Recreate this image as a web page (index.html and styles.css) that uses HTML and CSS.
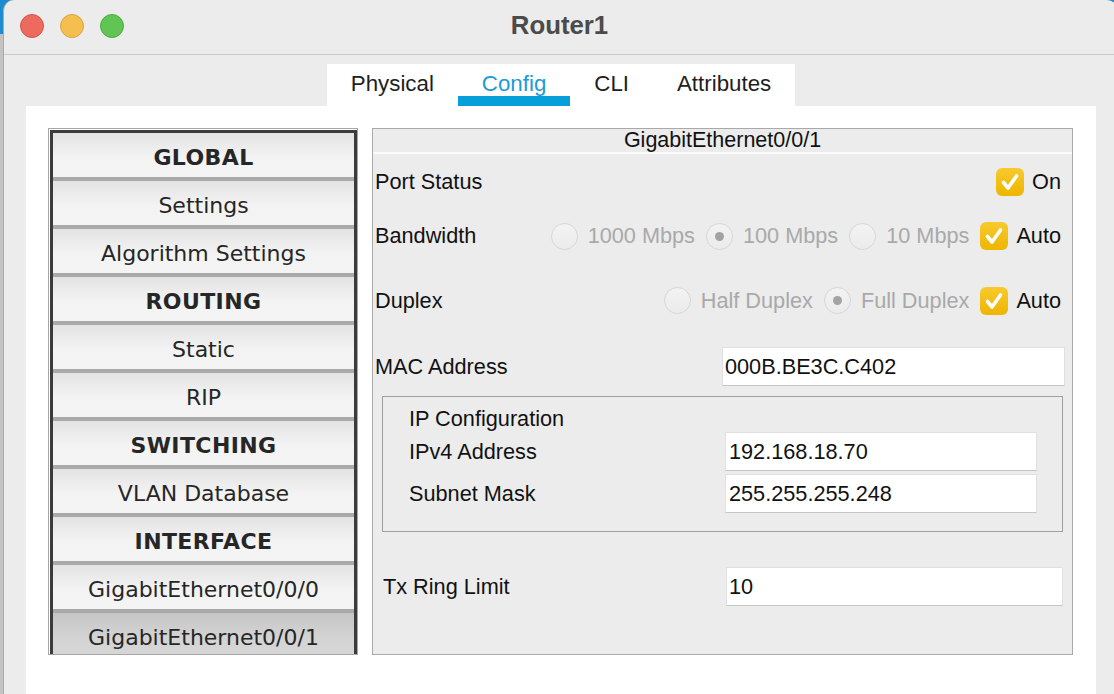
FILE: index.html
```html
<!DOCTYPE html>
<html lang="en">
<head>
<meta charset="utf-8">
<title>Router1</title>
<link rel="stylesheet" href="styles.css">
</head>
<body>
<div class="window">
  <header class="titlebar">
    <div class="lights">
      <span class="light red"></span>
      <span class="light yellow"></span>
      <span class="light green"></span>
    </div>
    <div class="title">Router1</div>
    <div></div>
  </header>

  <nav class="tabstrip">
    <div class="tabs">
      <div class="tab">Physical</div>
      <div class="tab active">Config</div>
      <div class="tab">CLI</div>
      <div class="tab">Attributes</div>
    </div>
  </nav>

  <main class="content">
    <aside class="sidebar">
      <div class="side-inner">
        <div class="item head">GLOBAL</div>
        <div class="item">Settings</div>
        <div class="item">Algorithm Settings</div>
        <div class="item head">ROUTING</div>
        <div class="item">Static</div>
        <div class="item">RIP</div>
        <div class="item head">SWITCHING</div>
        <div class="item">VLAN Database</div>
        <div class="item head">INTERFACE</div>
        <div class="item">GigabitEthernet0/0/0</div>
        <div class="item selected">GigabitEthernet0/0/1</div>
      </div>
    </aside>

    <section class="panel">
      <div class="panel-head">GigabitEthernet0/0/1</div>

      <div class="row row-port">
        <span class="label">Port Status</span>
        <span class="check"><svg viewBox="0 0 28 28" width="28" height="28"><path d="M7.5 14.5 L12 20 L20.5 8" fill="none" stroke="#fff" stroke-width="3.6" stroke-linecap="round" stroke-linejoin="round"/></svg></span>
        <span class="opt on">On</span>
      </div>

      <div class="row row-bw">
        <span class="label">Bandwidth</span>
        <span class="radio"></span><span class="opt dis">1000 Mbps</span>
        <span class="radio sel"></span><span class="opt dis">100 Mbps</span>
        <span class="radio"></span><span class="opt dis">10 Mbps</span>
        <span class="check"><svg viewBox="0 0 28 28" width="28" height="28"><path d="M7.5 14.5 L12 20 L20.5 8" fill="none" stroke="#fff" stroke-width="3.6" stroke-linecap="round" stroke-linejoin="round"/></svg></span>
        <span class="opt on">Auto</span>
      </div>

      <div class="row row-dx">
        <span class="label">Duplex</span>
        <span class="radio"></span><span class="opt dis">Half Duplex</span>
        <span class="radio sel"></span><span class="opt dis">Full Duplex</span>
        <span class="check"><svg viewBox="0 0 28 28" width="28" height="28"><path d="M7.5 14.5 L12 20 L20.5 8" fill="none" stroke="#fff" stroke-width="3.6" stroke-linecap="round" stroke-linejoin="round"/></svg></span>
        <span class="opt on">Auto</span>
      </div>

      <div class="field field-mac">
        <span class="label">MAC Address</span>
        <div class="input">000B.BE3C.C402</div>
      </div>

      <div class="group">
        <div class="group-title">IP Configuration</div>
        <div class="group-row">
          <span class="label">IPv4 Address</span>
          <div class="input">192.168.18.70</div>
        </div>
        <div class="group-row">
          <span class="label">Subnet Mask</span>
          <div class="input">255.255.255.248</div>
        </div>
      </div>

      <div class="field field-tx">
        <span class="label">Tx Ring Limit</span>
        <div class="input">10</div>
      </div>
    </section>
  </main>
</div>
</body>
</html>
```
FILE: styles.css
```css
* { box-sizing: border-box; }

html, body {
  margin: 0;
  height: 100%;
}

body {
  background: linear-gradient(#1d8bd0 0, #1d8bd0 34px, #c3c3c3 34px);
  overflow: hidden;
  font-family: "Liberation Sans", Arial, sans-serif;
  color: #111;
}

.window {
  margin-left: 3px;
  width: 1115px;
  height: 694px;
  background: #ececec;
  border-left: 1px solid #a9a9a9;
  border-radius: 11px 11px 0 0;
  display: flex;
  flex-direction: column;
  overflow: hidden;
}

/* ---------- title bar ---------- */
.titlebar {
  height: 55px;
  flex-shrink: 0;
  border-bottom: 1px solid #c9c9c9;
  display: grid;
  grid-template-columns: 1fr auto 1fr;
  align-items: center;
  padding-bottom: 2px;
}

.lights {
  display: flex;
  gap: 16px;
  padding-left: 16px;
}

.light {
  width: 24px;
  height: 24px;
  border-radius: 50%;
  display: block;
}
.light.red { background: #ed6a5e; border: 1px solid #d4554a; }
.light.yellow { background: #f5bf4f; border: 1px solid #d9a443; }
.light.green { background: #61c554; border: 1px solid #50a944; }

.title {
  font-weight: bold;
  font-size: 25.8px;
  line-height: 1;
  color: #4b4b4b;
  padding-bottom: 1px;
  margin-left: -3px;
}

/* ---------- tabs ---------- */
.tabstrip {
  flex-shrink: 0;
  padding-top: 9px;
  display: flex;
  justify-content: center;
}

.tabs {
  display: flex;
  background: #fff;
  height: 42px;
}

.tab {
  padding: 0 24px;
  font-size: 22.3px;
  line-height: 39px;
  color: #1e1e1e;
}

.tab.active {
  color: #1a9cd8;
  box-shadow: inset 0 -10px 0 #069fd9;
}

/* ---------- content ---------- */
.content {
  flex: 1;
  background: #fff;
  margin: 0 22px;
  padding: 22px 23px 0 22px;
  display: flex;
  gap: 14px;
  align-items: flex-start;
}

.sidebar {
  width: 310px;
  height: 527px;
  flex-shrink: 0;
  border: 1px solid #a6a6a6;
  padding: 1px 0 0 1px;
}

.side-inner {
  height: 100%;
  border: 3px solid #3b3b3b;
  border-bottom: 0;
  background: #a9a9a9;
  display: flex;
  flex-direction: column;
  gap: 4px;
  overflow: hidden;
}

.item {
  flex-shrink: 0;
  height: 44px;
  display: flex;
  align-items: center;
  justify-content: center;
  background: linear-gradient(#e3e3e3, #f3f3f3 55%, #f4f4f4);
  font-family: "DejaVu Sans", Verdana, sans-serif;
  font-size: 22px;
  color: #262626;
  padding-top: 5px;
}

.item.head {
  font-weight: bold;
  letter-spacing: 0.4px;
}

.item.selected {
  background: linear-gradient(#c6c6c6, #d4d4d4 60%, #d6d6d6);
}

/* ---------- right panel ---------- */
.panel {
  flex: 1;
  height: 527px;
  border: 1px solid #a9a9a9;
  background: #ececec;
  display: flex;
  flex-direction: column;
  font-size: 21.7px;
}

.panel-head {
  height: 25px;
  flex-shrink: 0;
  border-bottom: 2px solid #fafafa;
  text-align: center;
  font-size: 21.5px;
  line-height: 22px;
  color: #111;
}

.row {
  display: flex;
  align-items: center;
  padding: 0 11px 0 2px;
  flex-shrink: 0;
}

.row-port { height: 55px; }
.row-bw { height: 54px; }
.row-dx { height: 75px; }

.row .label { flex: 1; }

.radio {
  width: 27px;
  height: 27px;
  border-radius: 50%;
  border: 1px solid #d6d6d6;
  background: linear-gradient(#f3f3f3, #ebebeb);
  margin-right: 10px;
  display: flex;
  align-items: center;
  justify-content: center;
  flex-shrink: 0;
}

.radio.sel::before {
  content: "";
  width: 9px;
  height: 9px;
  border-radius: 50%;
  background: #a3a3a3;
}

.opt.dis {
  color: #a9a9a9;
  margin-right: 11px;
}

.check {
  width: 28px;
  height: 28px;
  border-radius: 6px;
  background: linear-gradient(#f7ca2e, #efb500);
  margin-right: 8px;
  display: block;
  flex-shrink: 0;
}

.check svg { display: block; }

.opt.on { color: #111; }

.field {
  display: grid;
  align-items: center;
  flex-shrink: 0;
}

.field-mac {
  margin-top: 9px;
  padding-left: 2px;
  margin-right: 7px;
  grid-template-columns: 347px 1fr;
}

.field-tx {
  margin-top: 35px;
  padding-left: 10px;
  margin-right: 9px;
  grid-template-columns: 343px 1fr;
}

.input {
  height: 39px;
  background: #fff;
  border: 1px solid #e0e0e0;
  border-bottom: 1px solid #c6c6c6;
  padding-left: 2px;
  line-height: 37px;
  color: #111;
  white-space: nowrap;
}

.group {
  margin: 10px 9px 0 9px;
  height: 136px;
  border: 1px solid #9f9f9f;
  padding: 10px 25px 0 26px;
  flex-shrink: 0;
  display: flex;
  flex-direction: column;
  gap: 3px;
}

.group-title {
  height: 24px;
  line-height: 24px;
  margin-bottom: -2px;
}

.group-row {
  display: grid;
  grid-template-columns: 316px 1fr;
  align-items: center;
}

.group-row .input { padding-left: 3px; }
```
